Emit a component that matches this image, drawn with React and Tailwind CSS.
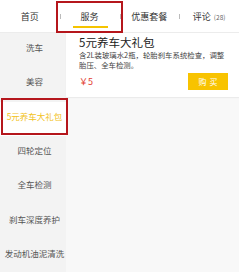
const tabs = ["首页", "服务", "优惠套餐", "评论"];
const menu = ["洗车", "美容", "5元养车大礼包", "四轮定位", "全车检测", "刹车深度养护", "发动机油泥清洗"];

export default function App() {
    return (
        <div className="w-[239px] h-[272px] overflow-hidden bg-white flex flex-col font-['Noto_Sans_CJK_SC',sans-serif]">
            {/* Tabs */}
            <div className="relative h-[33px] flex shrink-0 bg-white border-b border-[#ececec]">
                {tabs.map((t, i) => (
                    <div key={t} className="relative flex-1 flex items-center justify-center">
                        {i > 0 && <div className="absolute left-0 top-[14px] w-px h-[5px] bg-[#bbb]" />}
                        <span className="text-[9px] leading-none text-[#333]">
                            {t}
                            {i === 3 && <span className="ml-[3px] text-[6.5px] text-[#666]">(28)</span>}
                        </span>
                        {i === 1 && <div className="absolute left-[13px] top-[26px] w-[35px] h-[2px] bg-[#f5c400]" />}
                    </div>
                ))}
                <div className="absolute left-[56px] top-[1px] w-[67px] h-[32px] border-2 border-[#b5161c]" />
            </div>

            <div className="flex flex-1 min-h-0">
                {/* Sidebar */}
                <div className="w-[66px] shrink-0 bg-[#f3f3f3]">
                    {menu.map((m, i) => (
                        <div
                            key={m}
                            className={
                                "relative h-[34.33px] pt-[8px] pl-[3px] text-center text-[8.5px] leading-[12px] whitespace-nowrap " +
                                (i === 2 ? "bg-white text-[#f2c21a]" : "text-[#555]")
                            }
                        >
                            {m}
                            {i === 2 && (
                                <div className="absolute -top-[4px] left-[1px] w-[67px] h-[37px] border-2 border-[#b5161c]" />
                            )}
                        </div>
                    ))}
                </div>

                {/* Content */}
                <div className="flex-1 bg-[#f8f8f8]">
                    <div className="bg-white pl-[13px] pr-[11px] pt-[2px] pb-[7px] shadow-[0_1px_1px_rgba(0,0,0,0.05)]">
                        <div className="text-[11.5px] leading-[14px] text-[#222]">5元养车大礼包</div>
                        <div className="mt-[1px] text-[7.4px] leading-[10px] text-[#444] whitespace-nowrap">
                            含2L装玻璃水2瓶，轮胎刹车系统检查，调整
                            <br />
                            胎压、全车检测。
                        </div>
                        <div className="mt-[3px] flex items-center justify-between">
                            <span className="text-[9px] leading-none text-[#e23b2e]">￥5</span>
                            <div className="w-[40px] h-[17px] flex items-center justify-center bg-[#f8c300] text-white text-[8px] tracking-[3px] pl-[3px]">
                                购买
                            </div>
                        </div>
                    </div>
                </div>
            </div>
        </div>
    );
}
